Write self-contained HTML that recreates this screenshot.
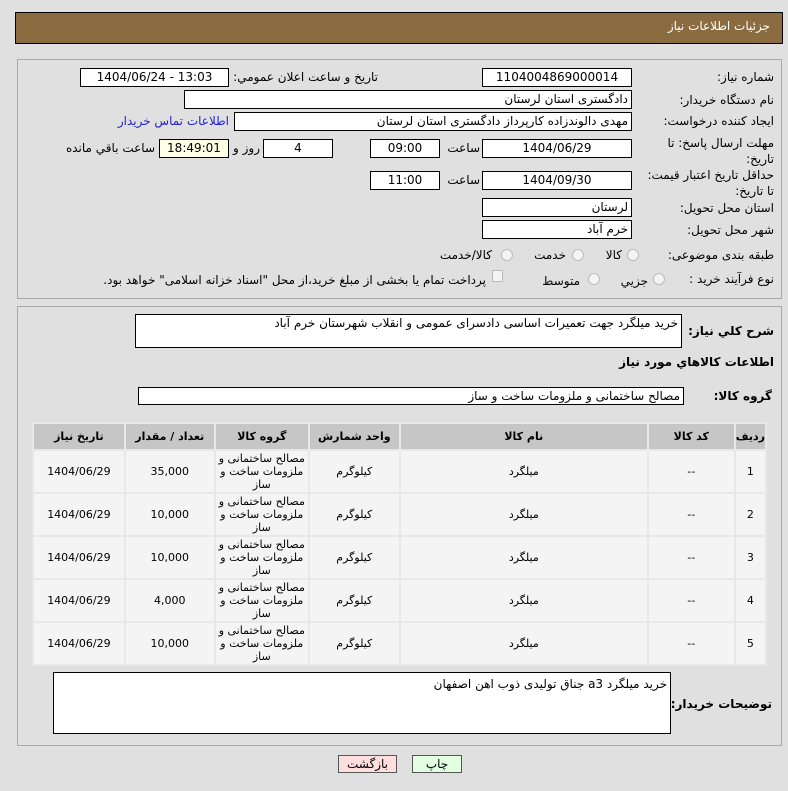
<!DOCTYPE html>
<html><head><meta charset="utf-8">
<style>
*{margin:0;padding:0;box-sizing:border-box}
body{width:788px;height:791px;background:#e0e0e0;font-family:"DejaVu Sans","Liberation Sans",sans-serif;font-size:11px;color:#000;position:relative;overflow:hidden}
.a{position:absolute;white-space:nowrap}
.box{position:absolute;background:#fff;border:1px solid #000;height:19px;line-height:17px;text-align:center;font-size:12px}
.r{direction:rtl;text-align:right;padding-right:3px}
.lbl{position:absolute;direction:rtl;text-align:right;font-size:12px;white-space:nowrap}
.panel{position:absolute;border:1px solid #aaa;background:#e0e0e0}
table{position:absolute;left:32px;top:422px;width:735px;border-collapse:collapse;direction:rtl;background:#e8e8e8}
td,th{border:2px solid #e8e8e8;text-align:center;font-size:11px;padding:0}
th{background:#c6c6c6;height:27px;font-weight:bold}
td{background:#f4f4f4;height:43px;line-height:13px}
tr.d{height:43px}
.rad{position:absolute;width:12px;height:12px;border-radius:50%;border:1px solid #bbb;background:#f4f4f4}
</style></head><body>
<div class="a" style="left:15px;top:12px;width:768px;height:32px;background:#8b6b40;border:1px solid #000"></div>
<div class="lbl" style="right:18px;top:19px;color:#fff;font-size:12px">جزئیات اطلاعات نیاز</div>

<div class="panel" style="left:17px;top:59px;width:765px;height:240px"></div>
<div class="lbl" style="right:14px;top:70px">شماره نیاز:</div>
<div class="box" style="left:482px;top:68px;width:150px">1104004869000014</div>
<div class="lbl" style="right:410px;top:70px">تاریخ و ساعت اعلان عمومي:</div>
<div class="box" style="left:80px;top:68px;width:149px">1404/06/24 - 13:03</div>

<div class="lbl" style="right:14px;top:93px">نام دستگاه خریدار:</div>
<div class="box r" style="left:184px;top:90px;width:448px">دادگستری استان لرستان</div>

<div class="lbl" style="right:14px;top:114px">ایجاد کننده درخواست:</div>
<div class="box r" style="left:234px;top:112px;width:398px">مهدی دالوندزاده کارپرداز دادگستری استان لرستان</div>
<div class="lbl" style="right:559px;top:114px;color:#2222cc">اطلاعات تماس خریدار</div>

<div class="lbl" style="right:14px;top:135px;line-height:16px">مهلت ارسال پاسخ: تا<br>تاریخ:</div>
<div class="box" style="left:482px;top:139px;width:150px">1404/06/29</div>
<div class="lbl" style="right:308px;top:141px">ساعت</div>
<div class="box" style="left:370px;top:139px;width:70px">09:00</div>
<div class="box" style="left:263px;top:139px;width:70px">4</div>
<div class="lbl" style="right:528px;top:141px">روز و</div>
<div class="box" style="left:159px;top:139px;width:70px;background:#ffffe6">18:49:01</div>
<div class="lbl" style="right:633px;top:141px">ساعت باقي مانده</div>

<div class="lbl" style="right:14px;top:167px;line-height:16px">حداقل تاریخ اعتبار قیمت:<br>تا تاریخ:</div>
<div class="box" style="left:482px;top:171px;width:150px">1404/09/30</div>
<div class="lbl" style="right:308px;top:173px">ساعت</div>
<div class="box" style="left:370px;top:171px;width:70px">11:00</div>

<div class="lbl" style="right:14px;top:201px">استان محل تحویل:</div>
<div class="box r" style="left:482px;top:198px;width:150px">لرستان</div>
<div class="lbl" style="right:14px;top:223px">شهر محل تحویل:</div>
<div class="box r" style="left:482px;top:220px;width:150px">خرم آباد</div>

<div class="lbl" style="right:14px;top:248px">طبقه بندی موضوعی:</div>
<div class="rad" style="left:627px;top:249px"></div><div class="lbl" style="right:166px;top:248px">کالا</div>
<div class="rad" style="left:572px;top:249px"></div><div class="lbl" style="right:222px;top:248px">خدمت</div>
<div class="rad" style="left:501px;top:249px"></div><div class="lbl" style="right:296px;top:248px">کالا/خدمت</div>

<div class="lbl" style="right:14px;top:272px">نوع فرآیند خرید :</div>
<div class="rad" style="left:653px;top:273px"></div><div class="lbl" style="right:140px;top:274px">جزيي</div>
<div class="rad" style="left:588px;top:273px"></div><div class="lbl" style="right:208px;top:274px">متوسط</div>
<div class="a" style="left:492px;top:270px;width:11px;height:12px;border:1px solid #bbb;background:#f4f4f4"></div>
<div class="lbl" style="right:302px;top:273px">پرداخت تمام یا بخشی از مبلغ خرید،از محل "اسناد خزانه اسلامی" خواهد بود.</div>

<div class="panel" style="left:17px;top:306px;width:765px;height:440px"></div>
<div class="lbl" style="right:14px;top:324px;font-weight:bold">شرح کلي نياز:</div>
<div class="box r" style="left:135px;top:314px;width:547px;height:34px;text-align:right;line-height:16px">خرید میلگرد جهت تعمیرات اساسی دادسرای عمومی و انقلاب شهرستان خرم آباد</div>
<div class="lbl" style="right:14px;top:355px;font-weight:bold">اطلاعات کالاهاي مورد نياز</div>
<div class="lbl" style="right:16px;top:389px;font-weight:bold">گروه کالا:</div>
<div class="box r" style="left:138px;top:387px;width:546px;height:18px;line-height:16px">مصالح ساختمانی و ملزومات ساخت و ساز</div>

<table>
<tr><th style="width:28px">ردیف</th><th style="width:87px">کد کالا</th><th style="width:248px">نام کالا</th><th style="width:91px">واحد شمارش</th><th style="width:94px">گروه کالا</th><th style="width:90px">تعداد / مقدار</th><th>تاریخ نیاز</th></tr>
<tr class="d"><td>1</td><td>--</td><td>میلگرد</td><td>کیلوگرم</td><td>مصالح ساختمانی و ملزومات ساخت و ساز</td><td>35,000</td><td>1404/06/29</td></tr>
<tr class="d"><td>2</td><td>--</td><td>میلگرد</td><td>کیلوگرم</td><td>مصالح ساختمانی و ملزومات ساخت و ساز</td><td>10,000</td><td>1404/06/29</td></tr>
<tr class="d"><td>3</td><td>--</td><td>میلگرد</td><td>کیلوگرم</td><td>مصالح ساختمانی و ملزومات ساخت و ساز</td><td>10,000</td><td>1404/06/29</td></tr>
<tr class="d"><td>4</td><td>--</td><td>میلگرد</td><td>کیلوگرم</td><td>مصالح ساختمانی و ملزومات ساخت و ساز</td><td>4,000</td><td>1404/06/29</td></tr>
<tr class="d"><td>5</td><td>--</td><td>میلگرد</td><td>کیلوگرم</td><td>مصالح ساختمانی و ملزومات ساخت و ساز</td><td>10,000</td><td>1404/06/29</td></tr>
</table>

<div class="lbl" style="right:16px;top:697px;font-weight:bold">توضیحات خریدار:</div>
<div class="box r" style="left:53px;top:672px;width:618px;height:62px;text-align:right;line-height:22px">خرید میلگرد a3  جناق تولیدی ذوب اهن اصفهان</div>

<div class="a" style="left:338px;top:755px;width:59px;height:18px;background:#ffdede;border:1px solid #555;text-align:center;line-height:16px;font-size:12px">بازگشت</div>
<div class="a" style="left:412px;top:755px;width:50px;height:18px;background:#e2ffe2;border:1px solid #555;text-align:center;line-height:16px;font-size:12px">چاپ</div>
</body></html>
